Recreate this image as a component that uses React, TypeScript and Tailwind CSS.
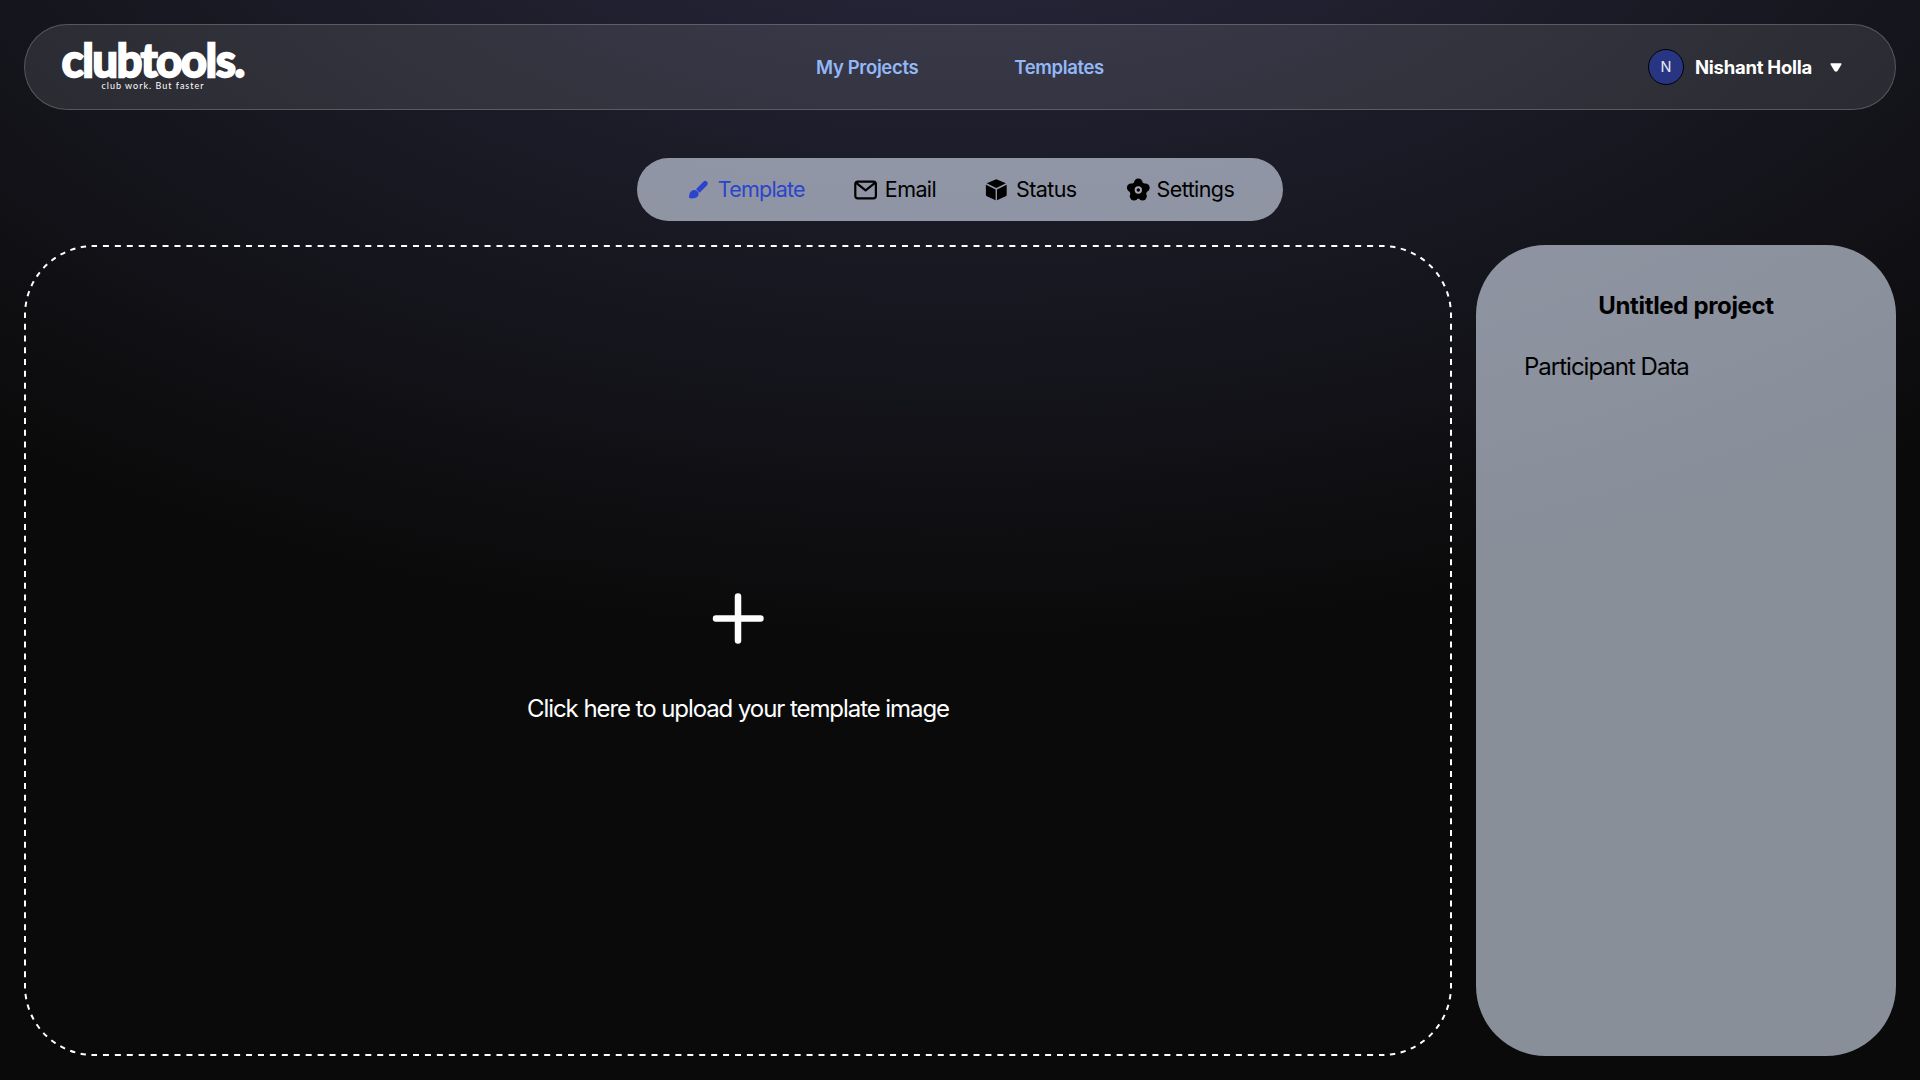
import type { ReactNode } from "react";

function Tab({ label, active, children }: { label: string; active?: boolean; children: ReactNode }) {
  return (
    <button className={active ? "flex items-center gap-2 text-[#2b44cc]" : "flex items-center gap-2 text-black"}>
      {children}
      <span className={active ? "tracking-[-0.8px]" : "tracking-[-0.6px]"}>{label}</span>
    </button>
  );
}

function BrushIcon() {
  return (
    <svg className="size-6" viewBox="0 0 24 24" fill="currentColor">
      <path d="M10.900 11.200 17.800 4.200a1.900 1.900 0 0 1 2.800 2.700l-7 7Z" stroke="currentColor" strokeWidth="1.300" strokeLinejoin="round" />
      <path d="M6.400 12.400c2-1.100 5.100-.1 6 2.200.9 2.500-.8 5-3.400 5.500-2 .4-4.100.5-5.900 0-.1-1.400-.1-2.700.3-3.900.4-1.600 1.300-3.100 3-3.800Z" />
    </svg>
  );
}

function MailIcon() {
  return (
    <svg className="size-6" viewBox="0 0 24 24" fill="none" stroke="currentColor" strokeWidth="2.200" strokeLinejoin="round">
      <rect x="2.300" y="3.700" width="20.600" height="16.600" rx="2.600" />
      <path d="M3.200 4.800 12.600 12.300l9.400-7.500" />
    </svg>
  );
}

function CubeIcon() {
  return (
    <svg className="size-6" viewBox="0 0 24 24" fill="currentColor">
      <path d="M12.300 1.300 21.900 5.300 12.300 9.900 2.700 5.300Z" />
      <path d="M1.900 6.700 11.600 11.500V22.200L3 18.300Q1.900 17.800 1.900 16.800Z" />
      <path d="M22.700 6.700 13 11.500V22.200L21.600 18.300Q22.700 17.800 22.700 16.800Z" />
    </svg>
  );
}

function FlowerIcon() {
  return (
    <svg className="size-6 overflow-visible" viewBox="0 0 24 24">
      <g fill="black">
        <circle cx="13.300" cy="12" r="8.800" />
        <circle cx="13.300" cy="4.700" r="4.300" />
        <circle cx="20.500" cy="9.700" r="4.200" />
        <circle cx="17.600" cy="18.300" r="4.200" />
        <circle cx="9" cy="18.300" r="4.200" />
        <circle cx="6.100" cy="9.700" r="4.200" />
      </g>
      <circle cx="13.300" cy="12" r="2.700" fill="none" stroke="#a3a7b6" strokeWidth="1.900" />
    </svg>
  );
}

/* Dashed outline of the drop zone: sides and corners keep their own dash rhythm. */
function DashedFrame() {
  return (
    <svg className="pointer-events-none absolute inset-0 size-full" viewBox="0 0 1428 811" fill="none" stroke="white" strokeWidth="2">
      <path d="M70 1H1358" strokeDasharray="6 5.926" strokeDashoffset="3" />
      <path d="M70 810H1358" strokeDasharray="6 5.926" strokeDashoffset="3" />
      <path d="M1 70V741" strokeDasharray="6 5.772" strokeDashoffset="3" />
      <path d="M1427 70V741" strokeDasharray="6 5.772" strokeDashoffset="3" />
      <g strokeDasharray="5.300 5.538" strokeDashoffset="2.650">
        <path d="M1 70A69 69 0 0 1 70 1" />
        <path d="M1358 1A69 69 0 0 1 1427 70" />
        <path d="M1427 741A69 69 0 0 1 1358 810" />
        <path d="M70 810A69 69 0 0 1 1 741" />
      </g>
    </svg>
  );
}

export default function App() {
  return (
    <div className="flex h-[1080px] w-[1920px] flex-col bg-neutral-950 bg-[radial-gradient(ellipse_80%_80%_at_50%_-20%,rgba(120,119,198,0.3),rgba(255,255,255,0))] p-6 font-['Inter',sans-serif]">
      <header className="grid h-[86px] shrink-0 grid-cols-[1fr_auto_1fr] items-center rounded-full border border-white/20 bg-white/10 px-9">
        <div className="flex w-[184px] flex-col items-center font-['Lato',sans-serif] text-white">
          <span className="text-[45px] leading-[38px] font-bold tracking-[-1.1px] [-webkit-text-stroke:2.4px_white]">clubtools.</span>
          <span className="text-[9px] leading-[14px] tracking-[1px]">club work. But faster</span>
        </div>
        <nav className="flex gap-24 pt-0.5 text-[18.5px] font-semibold tracking-[-0.35px] text-[#93b8f8]">
          <a>My Projects</a>
          <a>Templates</a>
        </nav>
        <div className="mr-[17px] flex items-center justify-self-end text-white">
          <span className="flex size-9 items-center justify-center rounded-full border border-black bg-[#283583] text-[14.5px] text-white/90">N</span>
          <span className="ml-[11px] pt-0.5 text-[18.5px] font-bold tracking-[-0.25px]">Nishant Holla</span>
          <svg className="ml-[18px] h-[9px] w-3" viewBox="0 0 12 9" fill="white" stroke="white" strokeWidth="1.500" strokeLinejoin="round">
            <path d="M1.200 1H10.800L6.900 7.500Q6 8.500 5.100 7.500Z" />
          </svg>
        </div>
      </header>

      <div className="mt-12 flex h-[63px] w-[646px] shrink-0 items-center justify-center gap-12 self-center rounded-full bg-[#dee8f9]/60 text-[21.5px]">
        <Tab label="Template" active><BrushIcon /></Tab>
        <Tab label="Email"><MailIcon /></Tab>
        <Tab label="Status"><CubeIcon /></Tab>
        <Tab label="Settings"><FlowerIcon /></Tab>
      </div>

      <main className="mt-6 flex min-h-0 flex-1 gap-6">
        <section className="relative flex flex-1 flex-col items-center justify-center rounded-[70px] pt-4 text-white">
          <DashedFrame />
          <svg className="size-[52px]" viewBox="0 0 52 52" stroke="white" strokeWidth="6.500" strokeLinecap="round">
            <path d="M26 3.500V47.500M4 25.500H48.500" />
          </svg>
          <p className="mt-12 text-[24px] leading-8 tracking-[-1.07px]">Click here to upload your template image</p>
        </section>
        <aside className="flex w-[420px] flex-col rounded-[70px] bg-[#dee8f9]/60 px-12 pt-[45px] text-2xl text-black">
          <h2 className="text-center font-bold tracking-[-0.35px]">Untitled project</h2>
          <p className="mt-[29px] tracking-[-1px]">Participant Data</p>
        </aside>
      </main>
    </div>
  );
}
